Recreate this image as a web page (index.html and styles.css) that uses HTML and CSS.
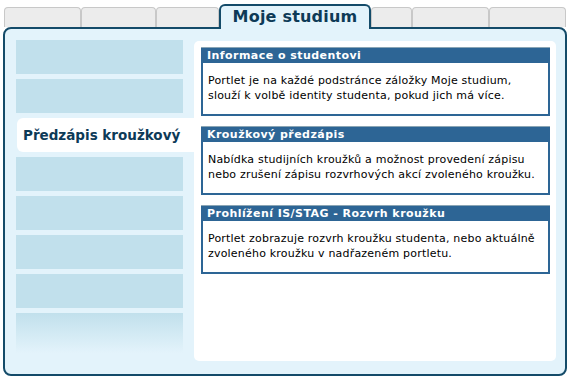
FILE: index.html
```html
<!DOCTYPE html>
<html lang="cs">
<head>
<meta charset="utf-8">
<title>Moje studium</title>
<link rel="stylesheet" href="styles.css">
</head>
<body>
<div class="page">
  <div class="tabs">
    <div class="tab t1"></div>
    <div class="tab t2"></div>
    <div class="tab t3"></div>
    <div class="tab-active">Moje studium</div>
    <div class="tab t5"></div>
    <div class="tab t6"></div>
    <div class="tab t7"></div>
  </div>
  <div class="panel">
    <div class="menu">
      <div class="item"></div>
      <div class="item"></div>
      <div class="item item-active">Předzápis kroužkový</div>
      <div class="item"></div>
      <div class="item"></div>
      <div class="item"></div>
      <div class="item"></div>
      <div class="item item-fade"></div>
    </div>
    <div class="content">
      <div class="portlet">
        <div class="portlet-head">Informace o studentovi</div>
        <div class="portlet-body">Portlet je na každé podstránce záložky Moje studium, slouží k volbě identity studenta, pokud jich má více.</div>
      </div>
      <div class="portlet">
        <div class="portlet-head">Kroužkový předzápis</div>
        <div class="portlet-body">Nabídka studijních kroužků a možnost provedení zápisu nebo zrušení zápisu rozvrhových akcí zvoleného kroužku.</div>
      </div>
      <div class="portlet">
        <div class="portlet-head">Prohlížení IS/STAG - Rozvrh kroužku</div>
        <div class="portlet-body">Portlet zobrazuje rozvrh kroužku studenta, nebo aktuálně zvoleného kroužku v nadřazeném portletu.</div>
      </div>
    </div>
  </div>
</div>
</body>
</html>
```
FILE: styles.css
```css
* { box-sizing: border-box; }
html, body { margin: 0; padding: 0; background: #ffffff; }
body { font-family: "DejaVu Sans", Verdana, sans-serif; color: #000; }

.page { padding: 4px 0 0 3px; width: 571px; }

.tabs {
  display: flex;
  align-items: flex-end;
  height: 23px;
  padding-left: 1px;
  position: relative;
  z-index: 2;
}
.tab {
  height: 20px;
  background: #ececec;
  border: 1px solid #c8c8c8;
  border-bottom: 0;
  border-radius: 4px 4px 0 0;
}
.t1 { width: 77px; }
.t2 { width: 75px; }
.t3 { width: 63px; }
.t5 { width: 41px; }
.t6 { width: 77px; }
.t7 { width: 77px; }

.tab-active {
  width: 152px;
  height: 25px;
  margin-bottom: -2px;
  background: #e3f3fb;
  border: 2px solid #144b69;
  border-bottom: 0;
  border-radius: 6px 6px 0 0;
  color: #0d3a57;
  font-weight: bold;
  font-size: 16px;
  letter-spacing: 0.2px;
  line-height: 22px;
  text-align: center;
}

.panel {
  width: 564px;
  height: 349px;
  display: flex;
  align-items: flex-start;
  background: #e3f3fb;
  border: 2px solid #144b69;
  border-radius: 8px;
  padding: 11px 9px 13px 11px;
}

.menu {
  width: 178px;
  display: flex;
  flex-direction: column;
  gap: 5px;
}
.item {
  width: 167px;
  height: 34px;
  background: #c1e0ec;
}
.item-active {
  width: 177px;
  margin-left: 1px;
  background: #ffffff;
  border-radius: 6px 0 0 6px;
  color: #0d3a57;
  font-weight: bold;
  font-size: 13.5px;
  line-height: 34px;
  padding-left: 6px;
  white-space: nowrap;
}
.item-fade {
  height: 40px;
  background: linear-gradient(#c1e0ec, #e3f3fb);
}

.content {
  width: 362px;
  height: 320px;
  margin-top: 1px;
  background: #ffffff;
  border-radius: 5px;
  padding: 6px 6px 6px 7px;
  display: flex;
  flex-direction: column;
  gap: 10px;
}

.portlet { width: 349px; }
.portlet-head {
  height: 16px;
  background: #2d6595;
  border-top: 1px solid #8aa5b5;
  color: #ffffff;
  font-weight: bold;
  font-size: 11px;
  line-height: 15px;
  padding-left: 6px;
  letter-spacing: 0.45px;
  white-space: nowrap;
}
.portlet-body {
  border: 2px solid #2d6595;
  border-top: 0;
  font-size: 11px;
  letter-spacing: 0.2px;
  line-height: 15px;
  padding: 10px 4px 9px 5px;
  height: 53px;
}
```
